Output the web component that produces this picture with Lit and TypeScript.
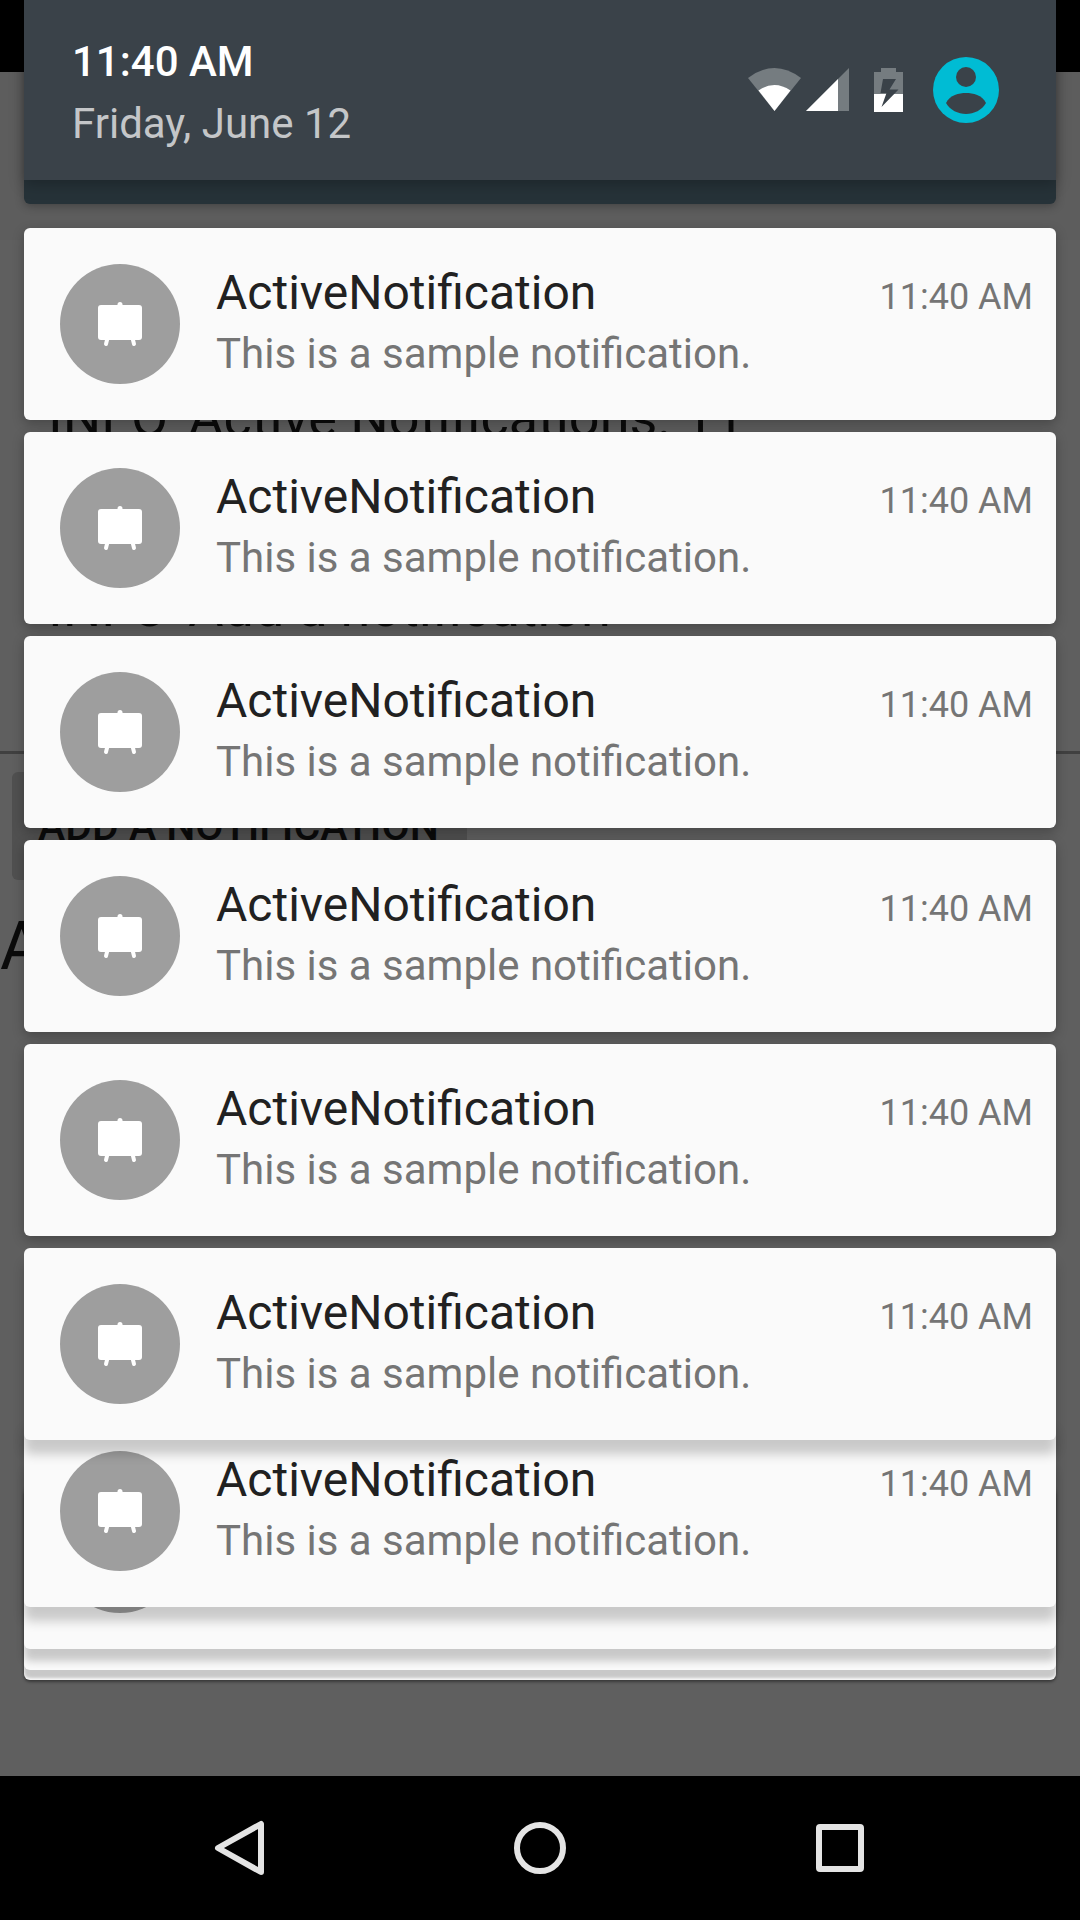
import { LitElement, html, css, svg, nothing } from "lit";
import { customElement, property } from "lit/decorators.js";

@customElement("notification-card")
class NotificationCard extends LitElement {
  @property() heading = "";
  @property() text = "";
  @property() time = "";
  @property({ type: Boolean }) collapsed = false;

  static styles = css`
    :host {
      display: block;
      position: relative;
      box-sizing: border-box;
      height: 192px;
      border-radius: 6px;
      background: #fafafa;
      box-shadow: 0 4px 12px rgba(0, 0, 0, 0.26);
    }
    .row {
      display: flex;
      height: 100%;
      padding: 36px 23px 36px 36px;
      box-sizing: border-box;
    }
    .badge {
      flex: none;
      width: 120px;
      height: 120px;
      margin-right: 36px;
    }
    .body {
      flex: 1;
      min-width: 0;
    }
    .top {
      display: flex;
      justify-content: space-between;
      align-items: baseline;
      line-height: 58px;
    }
    .title {
      margin: 0;
      font-size: 48px;
      font-weight: 400;
      color: #212121;
    }
    .time {
      font-size: 36px;
      color: #757575;
    }
    .text {
      margin: 0;
      padding-top: 3px;
      font-size: 42px;
      line-height: 50px;
      color: #757575;
    }
  `;

  render() {
    return html`<article class="row">
      <svg class="badge" viewBox="0 0 120 120" aria-hidden="true">
        <circle cx="60" cy="60" r="60" fill="#9e9e9e" />
        <rect x="38" y="41" width="44" height="35" rx="3" fill="#fff" />
        <circle cx="60" cy="40.5" r="2.5" fill="#fff" />
        <path d="M47.5 74L46 80M72.5 74L74 80" stroke="#fff" stroke-width="4" stroke-linecap="round" />
      </svg>
      ${this.collapsed
        ? nothing
        : html`<div class="body">
            <div class="top">
              <h2 class="title">${this.heading}</h2>
              <time class="time">${this.time}</time>
            </div>
            <p class="text">${this.text}</p>
          </div>`}
    </article>`;
  }
}

interface Item {
  heading: string;
  text: string;
  time: string;
}

const sample: Item = {
  heading: "ActiveNotification",
  text: "This is a sample notification.",
  time: "11:40 AM",
};

/* Cards past this index are tucked into the stack and show no text. */
const VISIBLE = 7;

@customElement("app-root")
class AppRoot extends LitElement {
  items: Item[] = Array.from({ length: 10 }, () => ({ ...sample }));

  static styles = css`
    :host {
      display: block;
      font-family: Roboto, "Noto Sans", sans-serif;
    }
    .screen {
      display: grid;
      grid-template-rows: 1fr auto;
      min-height: 100vh;
      overflow: hidden;
      background: #5f5f5f;
    }
    .app,
    .shade {
      grid-area: 1 / 1;
      min-width: 0;
    }
    .app {
      color: #0b0b0b;
    }
    .status {
      height: 72px;
      background: #000;
    }
    .toolbar {
      height: 168px;
      background: #5d5d5d;
    }
    .log {
      box-sizing: border-box;
      height: 514px;
      padding: 146px 48px 0;
      border-bottom: 3px solid #404040;
      font-size: 54px;
      line-height: 64px;
    }
    .log p {
      display: flex;
      gap: 20px;
      margin: 0 0 126px;
    }
    .add {
      display: block;
      height: 108px;
      margin: 18px 12px 0;
      padding: 0 28px 0 26px;
      border: 0;
      border-radius: 6px;
      background: #505050;
      color: #0b0b0b;
      font: 500 41px/108px Roboto, sans-serif;
    }
    .count {
      margin: 28px 0 0;
      font-size: 66px;
      line-height: 78px;
    }
    .shade {
      position: relative;
      padding: 0 24px 96px;
    }
    .panel {
      padding-bottom: 24px;
      margin-bottom: 24px;
      border-radius: 0 0 6px 6px;
      background: #263238;
      box-shadow: 0 2px 10px rgba(0, 0, 0, 0.3);
    }
    .header {
      display: flex;
      align-items: center;
      box-sizing: border-box;
      height: 180px;
      padding: 0 57px 0 48px;
      background: #3a4249;
      box-shadow: 0 4px 14px rgba(0, 0, 0, 0.25);
    }
    .clock {
      flex: 1;
      padding-top: 6px;
    }
    .now {
      font-size: 42px;
      font-weight: 500;
      line-height: 50px;
      color: #fff;
    }
    .date {
      padding-top: 12px;
      font-size: 42px;
      line-height: 50px;
      color: #c4c6c8;
    }
    .icons {
      width: 155px;
      height: 44px;
      margin-right: 30px;
    }
    .user {
      padding: 0;
      border: 0;
      background: none;
    }
    .user svg {
      display: block;
      width: 66px;
      height: 66px;
    }
    .list {
      display: flex;
      flex-direction: column;
      gap: 12px;
      margin: 0;
      padding: 0;
      list-style: none;
    }
    .list li {
      position: relative;
    }
    .stacked notification-card {
      box-shadow: 0 14px 12px rgba(0, 0, 0, 0.2);
    }
    .list li:nth-child(6) { z-index: 5; }
    .list li:nth-child(7) { z-index: 4; margin-top: -37px; }
    .list li:nth-child(8) { z-index: 3; margin-top: -162px; }
    .list li:nth-child(9) { z-index: 2; margin-top: -183px; }
    .list li:nth-child(10) { z-index: 1; margin-top: -194px; }
    .list li:nth-child(8) notification-card {
      box-shadow: 0 12px 8px rgba(0, 0, 0, 0.2);
    }
    .list li:nth-child(9) notification-card {
      box-shadow: 0 8px 3px rgba(0, 0, 0, 0.2);
    }
    .list li:nth-child(10) notification-card {
      box-shadow: 0 2px 3px rgba(0, 0, 0, 0.4);
    }
    .nav {
      display: flex;
      justify-content: center;
      gap: 156px;
      height: 144px;
      background: #000;
    }
    .nav button {
      display: grid;
      place-items: center;
      width: 144px;
      padding: 0;
      border: 0;
      background: none;
    }
    .nav svg {
      width: 72px;
      height: 72px;
      fill: none;
      stroke: #e4e4e4;
      stroke-width: 6;
      stroke-linejoin: round;
    }
  `;

  icon(shape: unknown) {
    return html`<svg viewBox="0 0 72 72" aria-hidden="true">${shape}</svg>`;
  }

  render() {
    return html`<div class="screen">
      <div class="app">
        <div class="status"></div>
        <div class="toolbar"></div>
        <div class="log">
          <p><span>INFO</span><span>Active Notifications: 11</span></p>
          <p><span>INFO</span><span>Add a notification</span></p>
        </div>
        <button class="add">ADD A NOTIFICATION</button>
        <p class="count">A</p>
      </div>
      <main class="shade">
        <div class="panel">
          <header class="header">
            <div class="clock">
              <div class="now">11:40 AM</div>
              <div class="date">Friday, June 12</div>
            </div>
            <svg class="icons" viewBox="0 0 155 44" aria-hidden="true">
              <path d="M0 10Q26.5 -10 53 10L26.5 43Z" fill="#757c80" />
              <path d="M10.5 22.5Q26.5 11.5 42.5 22.5L26.5 43Z" fill="#fff" />
              <path d="M101 0V43H58Z" fill="#757c80" />
              <path d="M90 11V43H58Z" fill="#fff" />
              <path d="M133 0H148V4H155V26H126V4H133Z" fill="#757c80" />
              <path d="M126 26H155V44H126Z" fill="#fff" />
              <path d="M135 11H148L141.5 21.5H150.5L133.5 39L138.5 25H132.5Z" fill="#3a4249" />
            </svg>
            <button class="user" aria-label="User">
              <svg viewBox="0 0 66 66" aria-hidden="true">
                <circle cx="33" cy="33" r="33" fill="#00bcd4" />
                <circle cx="33" cy="20" r="10" fill="#3a4249" />
                <path d="M13 46C17 38 26 36 33 36S49 38 53 46C49 53 41 57 33 57S17 53 13 46Z" fill="#3a4249" />
              </svg>
            </button>
          </header>
        </div>
        <ul class="list">
          ${this.items.map(
            (n, i) => html`<li class=${i >= 5 ? "stacked" : ""}>
              <notification-card
                .heading=${n.heading}
                .text=${n.text}
                .time=${n.time}
                .collapsed=${i >= VISIBLE}
              ></notification-card>
            </li>`
          )}
        </ul>
      </main>
      <nav class="nav">
        <button aria-label="Back">${this.icon(svg`<path d="M57 12V60L14 36Z" />`)}</button>
        <button aria-label="Home">${this.icon(svg`<circle cx="36" cy="36" r="23" />`)}</button>
        <button aria-label="Overview">${this.icon(svg`<rect x="15" y="15" width="42" height="42" rx="1" />`)}</button>
      </nav>
    </div>`;
  }
}
